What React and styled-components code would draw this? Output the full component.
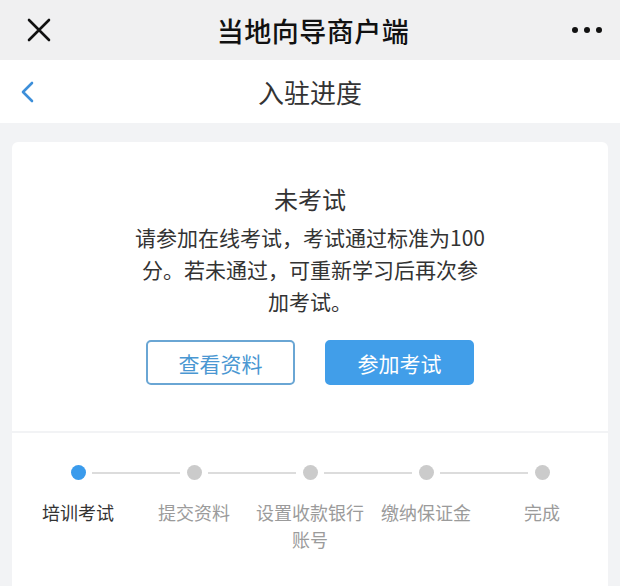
import React from "react";
import styled, { createGlobalStyle } from "styled-components";

const GlobalStyle = createGlobalStyle`
  body {
    margin: 0;
    background: #f2f3f5;
    font-family: "Noto Sans CJK SC", "Noto Sans", sans-serif;
  }
`;

const Page = styled.div`
  width: 620px;
  min-height: 586px;
  background: #f2f3f5;
  overflow: hidden;
`;

const TopBar = styled.header`
  height: 60px;
  background: #f0f0f1;
  display: flex;
  align-items: center;
  justify-content: space-between;
  padding: 0 18px 0 24px;
  box-sizing: border-box;
`;

const TopTitle = styled.h1`
  margin: 0;
  font-size: 27px;
  font-weight: 500;
  color: #111;
  letter-spacing: 0.5px;
`;

const IconButton = styled.div`
  width: 30px;
  height: 30px;
  display: flex;
  align-items: center;
  justify-content: center;
`;

const NavBar = styled.nav`
  height: 63px;
  background: #fff;
  display: flex;
  align-items: center;
  justify-content: space-between;
  padding: 0 20px;
  box-sizing: border-box;
`;

const NavTitle = styled.h2`
  margin: 0;
  font-size: 26px;
  font-weight: 400;
  color: #333;
`;

const Content = styled.main`
  padding: 19px 12px 0;
  display: flex;
  flex-direction: column;
  gap: 2px;
`;

const Card = styled.section`
  background: #fff;
  border-radius: ${({ top }) => (top ? "6px 6px 0 0" : "0")};
  display: flex;
  flex-direction: column;
  align-items: center;
`;

const StatusCard = styled(Card)`
  height: 289px;
  padding-top: 42px;
  box-sizing: border-box;
`;

const StatusTitle = styled.div`
  font-size: 24px;
  color: #333;
  line-height: 30px;
`;

const StatusText = styled.p`
  margin: 7px 0 0;
  width: 354px;
  font-size: 21px;
  line-height: 32px;
  color: #333;
  text-align: center;
`;

const ButtonRow = styled.div`
  display: flex;
  gap: 30px;
  margin-top: 23px;
`;

const Button = styled.button`
  width: 149px;
  height: 45px;
  border-radius: 5px;
  font-family: inherit;
  font-size: 21px;
  border: 2px solid ${({ primary }) => (primary ? "#419ee9" : "#6aa6d4")};
  background: ${({ primary }) => (primary ? "#419ee9" : "#fff")};
  color: ${({ primary }) => (primary ? "#fff" : "#4a97d2")};
  padding: 0;
`;

const StepsCard = styled(Card)`
  height: 160px;
  padding-top: 32px;
  box-sizing: border-box;
`;

const Steps = styled.div`
  display: grid;
  grid-template-columns: repeat(5, 116px);
`;

const Step = styled.div`
  display: flex;
  flex-direction: column;
  align-items: center;
  position: relative;
`;

const Dot = styled.span`
  width: 15px;
  height: 15px;
  border-radius: 50%;
  background: ${({ active }) => (active ? "#3a9bec" : "#cbcbcb")};
`;

const Connector = styled.span`
  position: absolute;
  top: 7px;
  left: calc(50% + 14px);
  width: 88px;
  height: 2px;
  background: #dcdcdc;
`;

const StepLabel = styled.div`
  margin-top: 19px;
  width: 110px;
  font-size: 18px;
  line-height: 27px;
  text-align: center;
  color: ${({ active }) => (active ? "#333" : "#9b9b9b")};
`;

const steps = ["培训考试", "提交资料", "设置收款银行账号", "缴纳保证金", "完成"];

export default function App() {
  return (
    <Page>
      <GlobalStyle />
      <TopBar>
        <IconButton>
          <svg width="24" height="24" viewBox="0 0 24 24">
            <path d="M2 2L22 22M22 2L2 22" stroke="#111" strokeWidth="2.6" strokeLinecap="round" />
          </svg>
        </IconButton>
        <TopTitle>当地向导商户端</TopTitle>
        <IconButton>
          <svg width="30" height="8" viewBox="0 0 30 8">
            <circle cx="3" cy="4" r="3" fill="#111" />
            <circle cx="15" cy="4" r="3" fill="#111" />
            <circle cx="27" cy="4" r="3" fill="#111" />
          </svg>
        </IconButton>
      </TopBar>
      <NavBar>
        <svg width="14" height="22" viewBox="0 0 14 22">
          <path d="M12 2L3 11L12 20" fill="none" stroke="#3d8fd9" strokeWidth="2.6" strokeLinecap="round" strokeLinejoin="round" />
        </svg>
        <NavTitle>入驻进度</NavTitle>
        <span style={{ width: 14 }} />
      </NavBar>
      <Content>
        <StatusCard top>
          <StatusTitle>未考试</StatusTitle>
          <StatusText>
            请参加在线考试，考试通过标准为100分。若未通过，可重新学习后再次参加考试。
          </StatusText>
          <ButtonRow>
            <Button>查看资料</Button>
            <Button primary>参加考试</Button>
          </ButtonRow>
        </StatusCard>
        <StepsCard>
          <Steps>
            {steps.map((label, i) => (
              <Step key={label}>
                <Dot active={i === 0} />
                {i < steps.length - 1 && <Connector />}
                <StepLabel active={i === 0}>{label}</StepLabel>
              </Step>
            ))}
          </Steps>
        </StepsCard>
      </Content>
    </Page>
  );
}
